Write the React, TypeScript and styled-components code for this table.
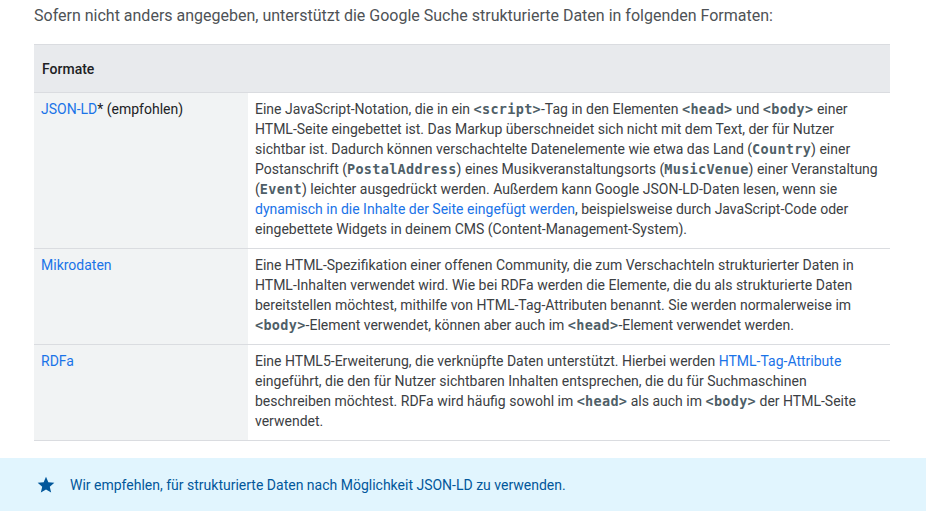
import React from 'react'
import styled, { createGlobalStyle } from 'styled-components'

const GlobalStyle = createGlobalStyle`
  html, body {
    margin: 0;
    padding: 0;
    background: #fff;
    font-family: Roboto, "Noto Sans", Arial, sans-serif;
    color: #3c4043;
  }
`

const Page = styled.div`
  padding-top: 4px;
`

const Content = styled.div`
  padding: 0 36px 0 34px;
`

const Intro = styled.p`
  margin: 0 0 16px;
  font-size: 16px;
  line-height: 24px;
  color: #4e5256;
`

const Table = styled.table`
  width: 856px;
  border-collapse: collapse;
  font-size: 14px;
  line-height: 20px;
  color: #3c4043;
`

const HeadCell = styled.th`
  text-align: left;
  font-weight: 500;
  background: #e8eaed;
  color: #202124;
  padding: 14px 8px 13px;
  border-top: 1px solid #dadce0;
  border-bottom: 1px solid #dadce0;
`

const Row = styled.tr`
  border-bottom: 1px solid #dadce0;
`

const NameCell = styled.td`
  width: 199px;
  vertical-align: top;
  background: #f1f3f4;
  padding: 6px 8px 9px 7px;
  color: #202124;
`

const TextCell = styled.td`
  vertical-align: top;
  padding: 6px 8px 9px 7px;
`

const Link = styled.a`
  color: #1a73e8;
  text-decoration: none;
`

const Code = styled.code`
  font-family: "DejaVu Sans Mono", "Liberation Mono", monospace;
  font-size: 13.5px;
  letter-spacing: 0.3px;
  color: #4f5f68;
  font-weight: 700;
`

const Callout = styled.aside`
  margin-top: 17px;
  background: #e1f5fe;
  color: #01579b;
  display: flex;
  align-items: center;
  gap: 14px;
  padding: 17px 0 17px 36px;
  font-size: 14px;
  line-height: 20px;
`

const Star = () => (
  <svg width="20" height="20" viewBox="0 0 24 24" aria-hidden="true">
    <path fill="#01579b" d="M12 17.27 18.18 21l-1.64-7.03L22 9.24l-7.19-.61L12 2 9.19 8.63 2 9.24l5.46 4.73L5.82 21z" />
  </svg>
)

export default function App() {
  return (
    <Page>
      <GlobalStyle />
      <Content>
        <Intro>Sofern nicht anders angegeben, unterstützt die Google Suche strukturierte Daten in folgenden Formaten:</Intro>
        <Table>
          <thead>
            <tr>
              <HeadCell colSpan={2}>Formate</HeadCell>
            </tr>
          </thead>
          <tbody>
            <Row>
              <NameCell><Link href="#">JSON-LD</Link>* (empfohlen)</NameCell>
              <TextCell>
                Eine JavaScript-Notation, die in ein <Code>&lt;script&gt;</Code>-Tag in den Elementen <Code>&lt;head&gt;</Code> und <Code>&lt;body&gt;</Code> einer
                HTML-Seite eingebettet ist. Das Markup überschneidet sich nicht mit dem Text, der für Nutzer sichtbar ist.
                Dadurch können verschachtelte Datenelemente wie etwa das Land (<Code>Country</Code>) einer Postanschrift
                (<Code>PostalAddress</Code>) eines Musikveranstaltungsorts (<Code>MusicVenue</Code>) einer Veranstaltung
                (<Code>Event</Code>) leichter ausgedrückt werden. Außerdem kann Google JSON-LD-Daten lesen, wenn sie{' '}
                <Link href="#">dynamisch in die Inhalte der Seite eingefügt werden</Link>, beispielsweise durch JavaScript-Code oder
                eingebettete Widgets in deinem CMS (Content-Management-System).
              </TextCell>
            </Row>
            <Row>
              <NameCell><Link href="#">Mikrodaten</Link></NameCell>
              <TextCell>
                Eine HTML-Spezifikation einer offenen Community, die zum Verschachteln strukturierter Daten in
                HTML-Inhalten verwendet wird. Wie bei RDFa werden die Elemente, die du als strukturierte Daten
                bereitstellen möchtest, mithilfe von HTML-Tag-Attributen benannt. Sie werden normalerweise im{' '}
                <Code>&lt;body&gt;</Code>-Element verwendet, können aber auch im <Code>&lt;head&gt;</Code>-Element verwendet werden.
              </TextCell>
            </Row>
            <Row>
              <NameCell><Link href="#">RDFa</Link></NameCell>
              <TextCell>
                Eine HTML5-Erweiterung, die verknüpfte Daten unterstützt. Hierbei werden <Link href="#">HTML-Tag-Attribute</Link>{' '}
                eingeführt, die den für Nutzer sichtbaren Inhalten entsprechen, die du für Suchmaschinen
                beschreiben möchtest. RDFa wird häufig sowohl im <Code>&lt;head&gt;</Code> als auch im <Code>&lt;body&gt;</Code> der HTML-Seite
                verwendet.
              </TextCell>
            </Row>
          </tbody>
        </Table>
      </Content>
      <Callout>
        <Star />
        <span>Wir empfehlen, für strukturierte Daten nach Möglichkeit JSON-LD zu verwenden.</span>
      </Callout>
    </Page>
  )
}
